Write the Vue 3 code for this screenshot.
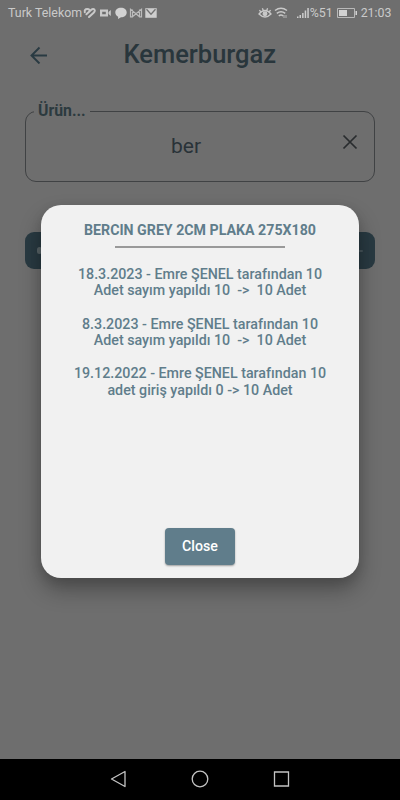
<script setup>
const entries = [
  ['18.3.2023 - Emre ŞENEL tarafından 10', 'Adet sayım yapıldı 10  ->  10 Adet'],
  ['8.3.2023 - Emre ŞENEL tarafından 10', 'Adet sayım yapıldı 10  ->  10 Adet'],
  ['19.12.2022 - Emre ŞENEL tarafından 10', 'adet giriş yapıldı 0 -> 10 Adet'],
]
</script>

<template>
  <div class="screen">
    <header class="status">
      <span class="carrier">Turk Telekom</span>
      <svg class="notices" width="74" height="14" viewBox="0 0 74 14">
        <g fill="none" stroke="#c9c9c9" stroke-width="2" stroke-linecap="round">
          <path d="M1.8 6.2Q1.2 3 4.2 3Q5.8 3 6.2 3.6M3.4 8.3L8 4Q10 2.2 11.4 3.4M6 11L10.6 6.8Q11.8 5.6 11.8 4.6" />
        </g>
        <path fill="#c9c9c9" fill-rule="evenodd" d="M17 3.5h8v7h-8zM19.2 5.7v2.6h3.6V5.7zM25.5 6l2.3-2v6l-2.3-2z" />
        <path fill="#d2d2d2" d="M38 1.8c3.3 0 5.7 2 5.7 4.7S41.3 11.3 38 11.3L35 13l.2-2.3C33.5 9.8 32.3 8.4 32.3 6.5c0-2.7 2.4-4.7 5.7-4.7z" />
        <path fill="none" stroke="#bcbcbc" stroke-width="1.2" d="M49.5 10.8h-2V3.2l5.5 4.5 5.5-4.5v7.6h-2V3.5M49.5 3.5v7.3l3.5-3 3.5 3" />
        <path fill="#cecece" d="M62.3 2.2h11.4v9.6H62.3z" />
        <path fill="none" stroke="#727272" stroke-width="1.3" d="M63.5 3.3l4.5 5 4.5-5" />
      </svg>
      <span class="spacer"></span>
      <svg class="signals" width="54" height="14" viewBox="0 0 54 14">
        <g fill="none" stroke="#c9c9c9" stroke-width="1.3">
          <path d="M1 8q6-7 12 0q-6 6-12 0zM1.3 4.2l2 1.8M4.4 2.3l.8 2M9.6 2.3l-.8 2M12.7 4.2l-2 1.8" />
          <circle cx="7" cy="7.8" r="1.8" fill="#c9c9c9" />
          <path d="M17 4.5q6-4.6 12 0M18.8 7.3q4.2-3.3 8.4 0M20.8 10q2.2-1.8 4.4 0" stroke-width="1.5" />
          <path d="M26 9v3M28 9v3" stroke-width=".8" />
        </g>
        <path fill="#cecece" d="M39 10.5h1.5V12H39zM41.5 9H43v3h-1.5zM44.1 7h1.5v5h-1.5zM46.7 4.5h1.5V12h-1.5zM49.3 2h1.5v10h-1.5z" />
      </svg>
      <span class="percent">%51</span>
      <svg class="battery" width="21" height="12" viewBox="0 0 21 12">
        <path fill="none" stroke="#b9b9b9" d="M.5 1.5h17v9H.5z" />
        <path fill="#d2d2d2" d="M2 3h8v6H2zM18.5 4h1.5v4h-1.5z" />
      </svg>
      <span class="clock">21:03</span>
    </header>

    <div class="title-bar">
      <svg width="18" height="18" viewBox="0 0 18 18">
        <path fill="none" stroke="#293a42" stroke-width="1.9" d="M17 9.5H1.5M9.5 1.5l-8 8 8 8" />
      </svg>
      <h1>Kemerburgaz</h1>
    </div>

    <fieldset class="field">
      <legend>Ürün...</legend>
      <div class="input">
        <span class="value">ber</span>
        <svg class="clear" width="16" height="16" viewBox="0 0 16 16">
          <path fill="none" stroke="#292c2e" stroke-width="1.7" d="M1.5 1.5l13 13M14.5 1.5l-13 13" />
        </svg>
      </div>
    </fieldset>

    <div class="result"><i></i><i class="end"></i></div>

    <nav class="navigation">
      <svg viewBox="0 0 240 40" width="240" height="40" fill="none" stroke="#c4c4c4" stroke-width="1.3">
        <path d="M45 12.5v15L31.5 20z" stroke-linejoin="round" />
        <circle cx="120" cy="20" r="7.8" />
        <path d="M194.5 13h14v14h-14z" />
      </svg>
    </nav>

    <section class="dialog">
      <h2>BERCIN GREY 2CM PLAKA 275X180</h2>
      <div class="rule"></div>
      <p v-for="(entry, index) in entries" :key="index">
        <span v-for="line in entry" :key="line">{{ line }}</span>
      </p>
      <button>Close</button>
    </section>
  </div>
</template>

<style>
body {
  background: #6e6e6e;
}
</style>

<style scoped>
* {
  box-sizing: border-box;
}
.screen {
  position: relative;
  display: flex;
  flex-direction: column;
  width: 400px;
  height: 800px;
  overflow: hidden;
  background: #6e6e6e;
  font-family: Roboto, sans-serif;
}
.status {
  display: flex;
  align-items: center;
  height: 26px;
  padding: 0 8.5px 0 8px;
  color: #cacaca;
  font-size: 12.4px;
  line-height: 16px;
  white-space: nowrap;
}
.carrier {
  width: 75px;
}
.spacer {
  flex: 1;
}
.signals {
  margin-right: -2px;
}
.percent {
  margin-right: 4px;
}
.battery {
  margin-right: 3px;
}
.title-bar {
  display: flex;
  align-items: center;
  height: 58px;
  padding-left: 30px;
}
.title-bar h1 {
  margin: -3px 0 0 75.5px;
  color: #29363c;
  font-size: 25.5px;
  font-weight: 500;
  line-height: 34px;
}
.field {
  height: 80px;
  width: 350px;
  margin: 18px 25px 0;
  padding: 0 16px 0 0;
  border: 1px solid #404244;
  border-radius: 11px;
}
.field legend {
  margin-left: 8px;
  padding: 0 4px;
  color: #2c3a3f;
  font-size: 15.8px;
  font-weight: 700;
  line-height: 18px;
}
.input {
  display: flex;
  align-items: center;
  height: 52px;
}
.value {
  flex: 1;
  padding-left: 4px;
  color: #293238;
  font-size: 21px;
  text-align: center;
}
.clear {
  margin-top: -8px;
}
.result {
  display: flex;
  align-items: center;
  justify-content: space-between;
  height: 37px;
  margin: 50px 25px 0;
  padding: 0 12px;
  border-radius: 9px;
  background: #293a42;
}
.result i {
  width: 5px;
  height: 7px;
  border-radius: 3px;
  background: #596468;
}
.result .end {
  width: 4px;
  height: 2px;
  background: #46545a;
}
.navigation {
  display: flex;
  justify-content: center;
  height: 41px;
  margin-top: auto;
  background: #000;
}
.dialog {
  position: absolute;
  left: 41px;
  top: 205px;
  display: flex;
  flex-direction: column;
  align-items: center;
  width: 318px;
  height: 373px;
  padding: 16px 0 13.5px;
  border-radius: 20px;
  background: #f1f1f1;
  color: #607d8b;
  box-shadow: 0 12px 22px rgb(0 0 0 / 30%), 0 4px 12px rgb(0 0 0 / 10%);
}
.dialog h2 {
  margin: 0;
  font-size: 14.2px;
  font-weight: 700;
  line-height: 18px;
  white-space: nowrap;
}
.rule {
  width: 170px;
  height: 2px;
  margin: 7px 0 18px;
  background: #999;
}
.dialog p {
  display: flex;
  flex-direction: column;
  align-items: center;
  margin: 0 0 16.9px;
  font-size: 14.25px;
  font-weight: 500;
  line-height: 16.4px;
  white-space: pre;
}
.dialog button {
  width: 70px;
  height: 37px;
  margin-top: auto;
  padding: 0;
  border: 0;
  border-radius: 4px;
  background: #607d8b;
  color: #fff;
  box-shadow: 0 1px 2px rgb(0 0 0 / 35%);
  font: 500 14.2px Roboto, sans-serif;
}
</style>
